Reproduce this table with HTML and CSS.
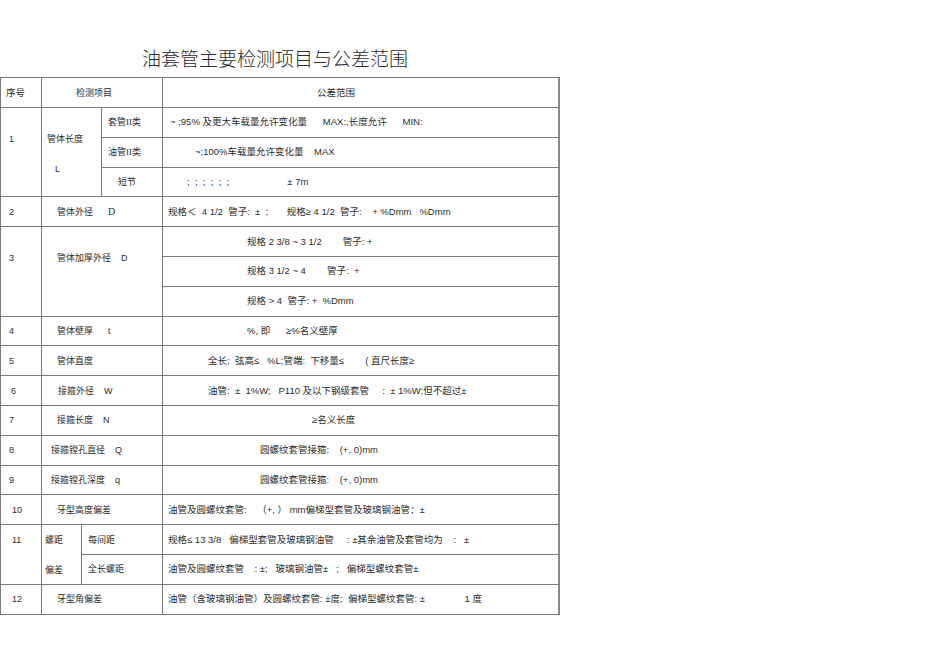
FILE: index.html
```html
<!DOCTYPE html>
<html lang="zh-CN">
<head>
<meta charset="utf-8">
<title>油套管主要检测项目与公差范围</title>
<link rel="stylesheet" href="styles.css">
</head>
<body>
<div class="page">
  <div class="title">油套管主要检测项目与公差范围</div>
  <table class="spec">
    <colgroup>
      <col class="c1"><col class="c2"><col class="c3"><col class="c4"><col class="c5">
    </colgroup>
    <tr class="head">
      <td class="p5 big">序号</td>
      <td colspan="3" class="p34">检测项目</td>
      <td class="p154 last">公差范围</td>
    </tr>
    <tr>
      <td rowspan="3" class="top p8">1</td>
      <td rowspan="3" colspan="2" class="top p5"><div>管体长度</div><div class="second p8">L</div></td>
      <td class="p6">套管<span class="roman">II</span>类</td>
      <td class="p7 last">~ ;95% 及更大车载量允许变化量      MAX:,长度允许      MIN:</td>
    </tr>
    <tr>
      <td class="p6">油管<span class="roman">II</span>类</td>
      <td class="p32 last">~;100%车载量允许变化量    MAX</td>
    </tr>
    <tr>
      <td class="p16">短节</td>
      <td class="p24 last">;  ;  ;  ;  ;  ;                      ± 7m</td>
    </tr>
    <tr>
      <td class="p8">2</td>
      <td colspan="3" class="p15">管体外径      <span class="serif">D</span></td>
      <td class="p5 last">规格＜  4 1/2  管子:  ±  ;       规格≥ 4 1/2  管子:    + %Dmm   %Dmm</td>
    </tr>
    <tr>
      <td rowspan="3" class="top p8">3</td>
      <td rowspan="3" colspan="3" class="top p15">管体加厚外径    D</td>
      <td class="p84 last">规格 2 3/8 ~ 3 1/2        管子: +</td>
    </tr>
    <tr>
      <td class="p84 last">规格 3 1/2 ~ 4        管子:  +</td>
    </tr>
    <tr>
      <td class="p84 last">规格 &gt; 4  管子: +  %Dmm</td>
    </tr>
    <tr>
      <td class="p8">4</td>
      <td colspan="3" class="p15">管体壁厚      t</td>
      <td class="p84 last">%, 即      ≥%名义壁厚</td>
    </tr>
    <tr>
      <td class="p8">5</td>
      <td colspan="3" class="p15">管体直度</td>
      <td class="p45 last">全长;  弦高≤   %L;管端:  下移量≤        ( 直尺长度≥</td>
    </tr>
    <tr>
      <td class="p10">6</td>
      <td colspan="3" class="p16">接箍外径    W</td>
      <td class="p45 last">油管:  ±  1%W;   P110 及以下钢级套管     :  ± 1%W;但不超过±</td>
    </tr>
    <tr>
      <td class="p8">7</td>
      <td colspan="3" class="p15">接箍长度    N</td>
      <td class="p149 last">≥名义长度</td>
    </tr>
    <tr>
      <td class="p8">8</td>
      <td colspan="3" class="p9">接箍镗孔直径    Q</td>
      <td class="p97 last">圆螺纹套管接箍:    (+, 0)mm</td>
    </tr>
    <tr>
      <td class="p8">9</td>
      <td colspan="3" class="p9">接箍镗孔深度    q</td>
      <td class="p97 last">圆螺纹套管接箍:    (+, 0)mm</td>
    </tr>
    <tr>
      <td class="p11">10</td>
      <td colspan="3" class="p15">牙型高度偏差</td>
      <td class="p5 last">油管及圆螺纹套管:    （+, ） mm偏梯型套管及玻璃钢油管：±</td>
    </tr>
    <tr>
      <td rowspan="2" class="top11 p11">11</td>
      <td rowspan="2" class="top11 p3"><div>螺距</div><div class="second">偏差</div></td>
      <td colspan="2" class="p6">每间距</td>
      <td class="p5 last">规格≤ 13 3/8   偏梯型套管及玻璃钢油管     : ±其余油管及套管均为    :   ±</td>
    </tr>
    <tr>
      <td colspan="2" class="p6">全长螺距</td>
      <td class="p5 last">油管及圆螺纹套管    : ±;   玻璃钢油管±   ;   偏梯型螺纹套管±</td>
    </tr>
    <tr>
      <td class="p11">12</td>
      <td colspan="3" class="p15">牙型角偏差</td>
      <td class="p5 last">油管（含玻璃钢油管）及圆螺纹套管: ±度;  偏梯型螺纹套管: ±               1 度</td>
    </tr>
  </table>
</div>
</body>
</html>
```
FILE: styles.css
```css
html, body {
  margin: 0;
  padding: 0;
  background: #ffffff;
}

.page {
  width: 560px;
  font-family: "Liberation Sans", "Noto Sans CJK SC", sans-serif;
  color: #2b2b2b;
}

.title {
  width: 550px;
  padding-right: 8px;
  margin-top: 48px;
  height: 20px;
  line-height: 20px;
  text-align: center;
  font-family: "Noto Sans CJK SC", sans-serif;
  font-weight: 300;
  font-size: 19px;
  color: #2a2a2a;
}

.spec {
  margin-top: 9px;
  border-collapse: separate;
  border-spacing: 0;
  table-layout: fixed;
  width: 559px;
  border-top: 1px solid #7a7a7a;
  border-left: 1px solid #7a7a7a;
}

.c1 { width: 41px; }
.c2 { width: 40px; }
.c3 { width: 20px; }
.c4 { width: 61px; }
.c5 { width: 397px; }

.spec tr { height: 29.8px; }
.spec tr.head { height: 30px; }

.spec td {
  box-sizing: border-box;
  padding: 0;
  border-right: 1px solid #7a7a7a;
  border-bottom: 1px solid #7a7a7a;
  font-size: 9px;
  line-height: 12px;
  white-space: pre;
  overflow: hidden;
  vertical-align: middle;
  text-align: left;
}

.spec td.last {
  border-right: 2px solid #8a8a8a;
  font-size: 9.5px;
}

.spec td.big { font-size: 9.5px; }

.spec td.top {
  vertical-align: top;
  padding-top: 25px;
}

.spec td.top11 {
  vertical-align: top;
  padding-top: 9px;
}

.second { margin-top: 18px; }

.roman {
  font-family: "Liberation Serif", serif;
  font-size: 9px;
}

.serif { font-family: "Liberation Serif", serif; font-size: 10px; }

.p3 { padding-left: 3px !important; }
.p5 { padding-left: 5px !important; }
.p6 { padding-left: 6px !important; }
.p7 { padding-left: 7px !important; }
.p8 { padding-left: 8px !important; }
.p9 { padding-left: 9px !important; }
.p10 { padding-left: 10px !important; }
.p11 { padding-left: 11px !important; }
.p15 { padding-left: 15px !important; }
.p16 { padding-left: 16px !important; }
.p24 { padding-left: 24px !important; }
.p32 { padding-left: 32px !important; }
.p34 { padding-left: 34px !important; }
.p45 { padding-left: 45px !important; }
.p84 { padding-left: 84px !important; }
.p97 { padding-left: 97px !important; }
.p149 { padding-left: 149px !important; }
.p154 { padding-left: 154px !important; }

.spec td div.p8 { padding-left: 8px; }
```
